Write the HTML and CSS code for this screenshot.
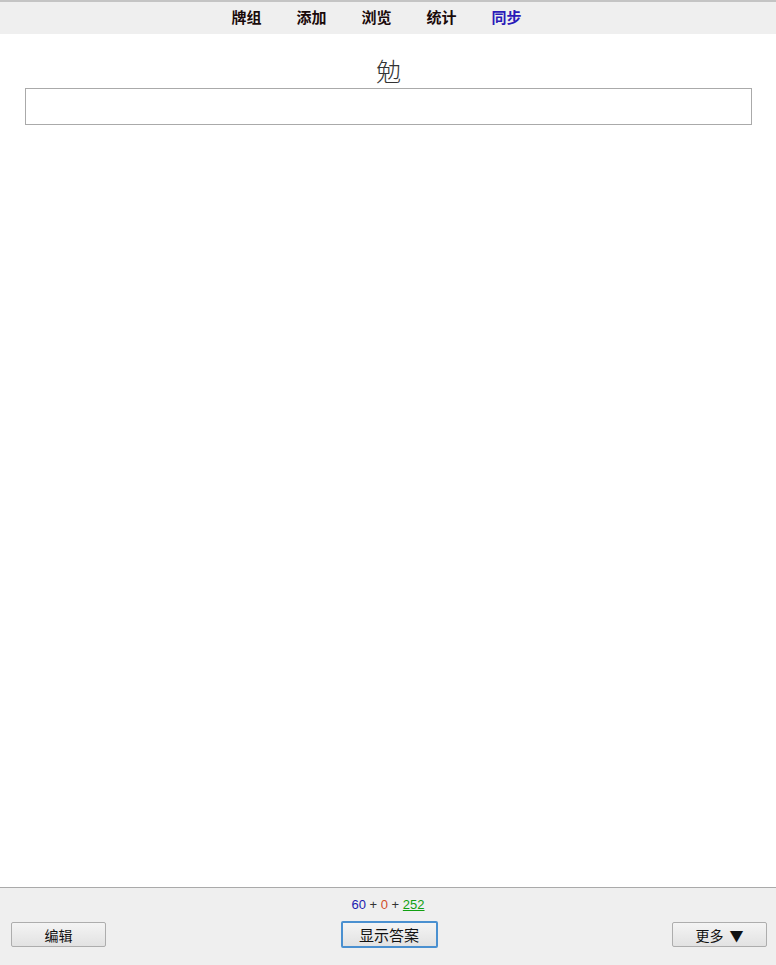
FILE: index.html
```html
<!DOCTYPE html>
<html lang="zh-CN">
<head>
  <meta charset="UTF-8">
  <title>Anki</title>
  <link rel="stylesheet" href="styles.css">
</head>
<body>
  <div class="topbar">
    <span class="nav-item">牌组</span>
    <span class="nav-item">添加</span>
    <span class="nav-item">浏览</span>
    <span class="nav-item">统计</span>
    <span class="nav-item sync">同步</span>
  </div>
  <div class="main">
    <div class="card-front">勉</div>
    <div class="answer-box"></div>
  </div>
  <div class="bottombar">
    <div class="counts">
      <span class="new">60</span> + <span class="learn">0</span> + <span class="review">252</span>
    </div>
    <div class="buttons">
      <button class="btn">编辑</button>
      <button class="btn show-answer">显示答案</button>
      <button class="btn">更多<span class="arrow">▼</span></button>
    </div>
  </div>
</body>
</html>
```

FILE: styles.css
```css
html, body {
  margin: 0;
  height: 100%;
}
body {
  display: flex;
  flex-direction: column;
  font-family: "Liberation Sans", "Noto Sans CJK SC", sans-serif;
  background: #fff;
  color: #000;
}
.topbar {
  height: 32px;
  border-top: 2px solid #c4c4c4;
  background: #efefef;
  display: flex;
  justify-content: center;
  align-items: center;
  gap: 35px;
  padding-right: 23px;
}
.nav-item {
  font-family: "Noto Sans CJK SC", sans-serif;
  font-weight: bold;
  font-size: 15px;
  color: #1a0a0a;
  margin-bottom: 3px;
}
.nav-item.sync {
  color: #2a1ab8;
}
.main {
  flex: 1;
  padding: 0 24px 0 25px;
}
.card-front {
  text-align: center;
  font-family: "Noto Sans CJK SC", sans-serif;
  font-weight: 300;
  font-size: 25px;
  line-height: 30px;
  margin-top: 21px;
  color: #333;
}
.answer-box {
  height: 35px;
  border: 1px solid #aaa;
  margin-top: 3px;
}
.bottombar {
  height: 77px;
  border-top: 1px solid #aaa;
  background: #efefef;
  display: flex;
  flex-direction: column;
}
.counts {
  text-align: center;
  font-size: 13px;
  line-height: 16px;
  margin-top: 9px;
  color: #333;
}
.counts .new { color: #1b1bb0; }
.counts .learn { color: #d2502a; }
.counts .review { color: #11a011; text-decoration: underline; }
.buttons {
  display: flex;
  justify-content: space-between;
  align-items: center;
  padding: 0 9px 0 11px;
  margin-top: 8px;
}
.btn {
  width: 95px;
  height: 25px;
  font-family: "Noto Sans CJK SC", sans-serif;
  font-size: 14px;
  color: #111;
  background: linear-gradient(to bottom, #f4f4f4, #e2e2e2);
  border: 1px solid #adadad;
  border-radius: 2px;
  padding: 0;
}
.btn .arrow {
  margin-left: 6px;
}
.btn.show-answer {
  width: 97px;
  height: 27px;
  border: 2px solid #4a90d0;
  font-size: 15px;
}
```
